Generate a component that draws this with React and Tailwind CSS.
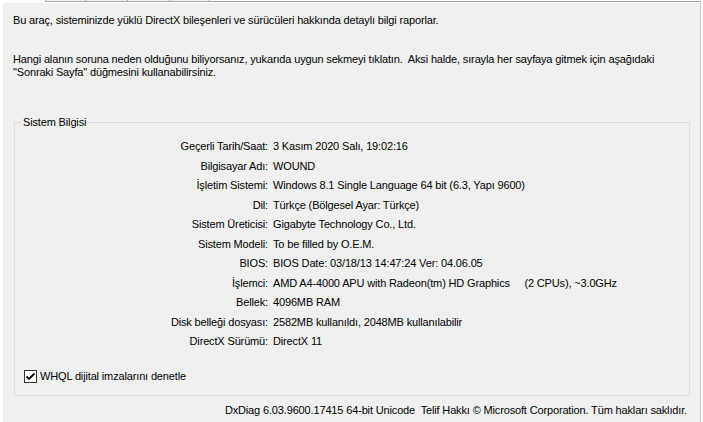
import React from "react";

const rows = [
  ["Geçerli Tarih/Saat:", "3 Kasım 2020 Salı, 19:02:16"],
  ["Bilgisayar Adı:", "WOUND"],
  ["İşletim Sistemi:", "Windows 8.1 Single Language 64 bit (6.3, Yapı 9600)"],
  ["Dil:", "Türkçe (Bölgesel Ayar: Türkçe)"],
  ["Sistem Üreticisi:", "Gigabyte Technology Co., Ltd."],
  ["Sistem Modeli:", "To be filled by O.E.M."],
  ["BIOS:", "BIOS Date: 03/18/13 14:47:24 Ver: 04.06.05"],
  ["İşlemci:", "AMD A4-4000 APU with Radeon(tm) HD Graphics     (2 CPUs), ~3.0GHz"],
  ["Bellek:", "4096MB RAM"],
  ["Disk belleği dosyası:", "2582MB kullanıldı, 2048MB kullanılabilir"],
  ["DirectX Sürümü:", "DirectX 11"],
];

const App = () => {
  return (
    <div className="w-[703px] h-[422px] bg-white overflow-hidden font-['Liberation_Sans',Arial,sans-serif] text-[11px] tracking-[-0.15px] text-black">
      {/* tab strip bottom */}
      <div className="flex h-[3px]">
        <div className="w-[45px]" />
        <div className="flex h-[2px]">
          <div className="w-[41px] border-x border-b border-[#acacac] bg-[#f0f0f0]" />
          <div className="w-[42px] border-r border-b border-[#acacac] bg-[#f0f0f0]" />
          <div className="w-[42px] border-r border-b border-[#acacac] bg-[#f0f0f0]" />
          <div className="w-[40px] border-r border-b border-[#acacac] bg-[#f0f0f0]" />
        </div>
        <div className="flex-1 mt-[1px] h-[1px] bg-[#a0a0a0] mr-[2px]" />
      </div>

      <div className="ml-[3px] w-[698px] h-[419px] bg-[#f0f0f0] border-r border-[#c9c9c9] pl-[10px] pr-[13px]">
        <p className="pt-[11px] leading-[13px]">
          Bu araç, sisteminizde yüklü DirectX bileşenleri ve sürücüleri hakkında detaylı bilgi raporlar.
        </p>
        <p className="mt-[26px] leading-[13px]">
          Hangi alanın soruna neden olduğunu biliyorsanız, yukarıda uygun sekmeyi tıklatın.&nbsp; Aksi halde, sırayla her sayfaya gitmek için aşağıdaki
          <br />
          "Sonraki Sayfa" düğmesini kullanabilirsiniz.
        </p>

        <div className="relative mt-[43px] ml-[1px] w-[676px] h-[274px] border border-[#dcdcdc]">
          <span className="absolute -top-[7px] left-[6px] px-[2px] bg-[#f0f0f0] leading-[13px]">
            Sistem Bilgisi
          </span>
          <div className="pt-[14px] grid grid-cols-[253px_1fr] gap-x-[5px]">
            {rows.map(([label, value]) => (
              <React.Fragment key={label}>
                <div className="text-right leading-[19.5px]">{label}</div>
                <div className="leading-[19.5px] whitespace-pre">{value}</div>
              </React.Fragment>
            ))}
          </div>
          <label className="mt-[18px] ml-[9px] flex items-center gap-[3px] leading-[13px]">
            <span className="w-[13px] h-[13px] bg-white border border-[#333333] flex items-center justify-center">
              <svg width="11" height="11" viewBox="0 0 11 11">
                <path d="M1.5 5.5 L4 8 L9.5 2.5" fill="none" stroke="#000" strokeWidth="1.8" />
              </svg>
            </span>
            WHQL dijital imzalarını denetle
          </label>
        </div>

        <p className="mt-[8px] leading-[13px] text-right whitespace-pre">
          DxDiag 6.03.9600.17415 64-bit Unicode  Telif Hakkı © Microsoft Corporation. Tüm hakları saklıdır.
        </p>
      </div>
    </div>
  );
};

export default App;
